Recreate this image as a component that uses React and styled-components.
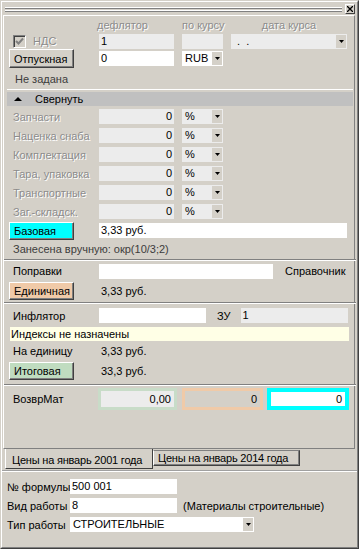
import React from "react";
import styled, { createGlobalStyle } from "styled-components";

const GlobalStyle = createGlobalStyle`
  html, body { margin: 0; padding: 0; background: #d4d0c8; }
  * { box-sizing: border-box; }
`;

const Window = styled.div`
  width: 359px;
  height: 549px;
  background: #d4d0c8;
  border: 1px solid;
  border-color: #d4d0c8 #404040 #404040 #d4d0c8;
  font-family: "Liberation Sans", Arial, sans-serif;
  font-size: 11px;
  color: #000;
  overflow: hidden;
`;

const Frame = styled.div`
  height: 100%;
  border: 1px solid;
  border-color: #fff #808080 #808080 #fff;
  display: flex;
  flex-direction: column;
`;

const TitleBar = styled.div`
  height: 13px;
  display: flex;
  align-items: center;
  padding: 0 1px 0 3px;
`;

const Grip = styled.div`
  flex: 1;
  display: flex;
  flex-direction: column;
  gap: 1px;
  margin: 2px 3px 0 0;
`;

const GripLine = styled.div`
  height: 2px;
  border-top: 1px solid #fff;
  border-bottom: 1px solid #808080;
`;

const CloseBtn = styled.div`
  width: 10px;
  height: 10px;
  margin-right: 1px;
  border: 1px solid;
  border-color: #fff #404040 #404040 #fff;
  display: flex;
  align-items: center;
  justify-content: center;
`;

const Panel = styled.div`
  flex: 1;
  margin: 0 2px 0 1px;
  padding: 0 1px 0 3px;
  border: 1px solid;
  border-color: #fff #808080 #808080 #fff;
  display: flex;
  flex-direction: column;
`;

const Row = styled.div`
  display: flex;
  align-items: center;
  height: ${(p) => p.$h}px;
  margin-top: ${(p) => p.$mt || 0}px;
  flex-shrink: 0;
`;

const Cell = styled.div`
  width: ${(p) => p.$w}px;
  padding-left: ${(p) => p.$pl || 0}px;
  display: flex;
  align-items: center;
  flex-shrink: 0;
  white-space: nowrap;
`;

const Label = styled.span`
  white-space: nowrap;
  color: ${(p) => (p.$disabled ? "#8c8c8c" : p.$dim ? "#3c3c3c" : "#000")};
  text-shadow: ${(p) => (p.$disabled ? "1px 1px 0 #fff" : "none")};
  margin-left: ${(p) => p.$ml || 0}px;
`;

const HeadLabel = styled.div`
  width: ${(p) => p.$w}px;
  text-align: ${(p) => p.$align || "left"};
  color: #8c8c8c;
  text-shadow: 1px 1px 0 #fff;
  flex-shrink: 0;
`;

const Field = styled.div`
  width: ${(p) => p.$w}px;
  height: 15px;
  margin-left: ${(p) => p.$ml || 0}px;
  background: ${(p) => p.$bg || "#fff"};
  text-align: ${(p) => p.$align || "left"};
  padding: 0 2px;
  line-height: 15px;
  flex-shrink: 0;
  white-space: nowrap;
  overflow: hidden;
`;

const Combo = styled.div`
  width: ${(p) => p.$w}px;
  height: 15px;
  margin-left: ${(p) => p.$ml || 0}px;
  background: ${(p) => p.$bg || "#fff"};
  display: flex;
  align-items: center;
  flex-shrink: 0;
`;

const ComboText = styled.div`
  flex: 1;
  padding-left: 3px;
  line-height: 15px;
  white-space: nowrap;
  overflow: hidden;
`;

const ArrowBtn = styled.div`
  width: 10px;
  height: 13px;
  margin: 1px;
  background: #d4d0c8;
  display: flex;
  align-items: center;
  justify-content: center;
`;

const Button = styled.div`
  width: 65px;
  height: ${(p) => p.$h || 18}px;
  margin-left: 2px;
  padding-left: 4px;
  background: ${(p) => p.$bg || "#d4d0c8"};
  border: 1px solid;
  border-color: #fff #404040 #404040 #fff;
  box-shadow: inset -1px -1px 0 #808080;
  display: flex;
  align-items: center;
  white-space: nowrap;
  flex-shrink: 0;
`;

const Value = styled.div`
  padding-left: 2px;
  white-space: nowrap;
`;

const Separator = styled.div`
  height: 2px;
  margin: ${(p) => p.$mt || 0}px -3px 0;
  border-top: 1px solid #808080;
  border-bottom: 1px solid #fff;
  flex-shrink: 0;
`;

const CollapseWrap = styled.div`
  border-top: 1px solid #fff;
  padding-top: 2px;
  flex-shrink: 0;
`;

const CollapseBar = styled.div`
  height: 14px;
  background: #c0c0c0;
  display: flex;
  align-items: center;
  padding-left: 7px;
`;

const InfoBar = styled.div`
  height: 14px;
  margin: 1px 4px 0 3px;
  padding-left: 1px;
  background: #ffffe6;
  line-height: 14px;
  flex-shrink: 0;
`;

const Framed = styled.div`
  width: ${(p) => p.$w}px;
  height: 22px;
  margin-left: ${(p) => p.$ml || 0}px;
  border: ${(p) => p.$bw}px solid ${(p) => p.$color};
  background: ${(p) => p.$bg};
  text-align: right;
  padding-right: 3px;
  line-height: ${(p) => 22 - p.$bw * 2}px;
  flex-shrink: 0;
`;

const CheckBox = styled.div`
  width: 13px;
  height: 13px;
  border: 1px solid;
  border-color: #808080 #fff #fff #808080;
  box-shadow: inset 1px 1px 0 #404040;
  background: #d4d0c8;
  display: flex;
  align-items: center;
  justify-content: center;
  flex-shrink: 0;
`;

const TabStrip = styled.div`
  height: 21px;
  display: flex;
  padding-left: 3px;
  flex-shrink: 0;
`;

const Tab = styled.div`
  width: ${(p) => p.$w}px;
  height: ${(p) => (p.$active ? 20 : 16)}px;
  margin-top: ${(p) => (p.$active ? 0 : 1)}px;
  padding: ${(p) => (p.$active ? "5px 0 0 6px" : "1px 0 0 4px")};
  border: 1px solid;
  border-color: ${(p) =>
    p.$active ? "transparent #404040 #404040 #fff" : "#808080 #404040 #404040 #fff"};
  border-top: ${(p) => (p.$active ? "none" : "1px solid #808080")};
  box-shadow: ${(p) => (p.$active ? "none" : "inset -1px -1px 0 #808080")};
  letter-spacing: -0.2px;
  white-space: nowrap;
`;

const TabLine = styled.div`
  height: 2px;
  border-top: 1px solid #a0a0a0;
  border-bottom: 1px solid #fff;
  flex-shrink: 0;
`;

const BottomForm = styled.div`
  height: 75px;
  padding-top: 5px;
  flex-shrink: 0;
`;

const Arrow = () => (
  <svg width="5" height="3" viewBox="0 0 5 3">
    <polygon points="0,0 5,0 2.5,3" fill="#000" />
  </svg>
);

const Select = ({ w, ml, bg, children }) => (
  <Combo $w={w} $ml={ml} $bg={bg}>
    <ComboText>{children}</ComboText>
    <ArrowBtn>
      <Arrow />
    </ArrowBtn>
  </Combo>
);

const params = [
  "Запчасти",
  "Наценка снаба",
  "Комплектация",
  "Тара, упаковка",
  "Транспортные",
  "Заг.-складск.",
];

export default function App() {
  return (
    <>
      <GlobalStyle />
      <Window>
        <Frame>
          <TitleBar>
            <Grip>
              <GripLine />
              <GripLine />
            </Grip>
            <CloseBtn>
              <svg width="6" height="6" viewBox="0 0 6 6">
                <path d="M0 0 L6 6 M6 0 L0 6" stroke="#000" strokeWidth="1.3" />
              </svg>
            </CloseBtn>
          </TitleBar>

          <Panel>
            <Row $h={16} $mt={1}>
              <Cell $w={90} />
              <HeadLabel $w={85}>дефлятор</HeadLabel>
              <HeadLabel $w={49}>по курсу</HeadLabel>
              <HeadLabel $w={116} $align="center">дата курса</HeadLabel>
            </Row>
            <Row $h={16}>
              <Cell $w={92} $pl={6}>
                <CheckBox>
                  <svg width="9" height="9" viewBox="0 0 9 9">
                    <polyline points="1,4 3.5,6.5 8,1.5" fill="none" stroke="#808080" strokeWidth="2" />
                  </svg>
                </CheckBox>
                <Label $disabled $ml={7}>НДС</Label>
              </Cell>
              <Field $w={75} $bg="#ececec">1</Field>
              <Field $w={41} $ml={8} $bg="#ececec" />
              <Select w={116} ml={8} bg="#ececec">&nbsp;.&nbsp;&nbsp;.</Select>
            </Row>
            <Row $h={19}>
              <Cell $w={92}>
                <Button $h={19}>Отпускная</Button>
              </Cell>
              <Field $w={75}>0</Field>
              <Select w={41} ml={8}>RUB</Select>
            </Row>
            <Row $h={21}>
              <Cell $w={92} $pl={8}>
                <Label $dim>Не задана</Label>
              </Cell>
            </Row>
            <CollapseWrap>
              <CollapseBar>
                <svg width="8" height="4" viewBox="0 0 8 4">
                  <polygon points="0,4 8,4 4,0" fill="#000" />
                </svg>
                <Label $ml={13}>Свернуть</Label>
              </CollapseBar>
            </CollapseWrap>

            {params.map((p, i) => (
              <Row key={p} $h={19} $mt={i === 0 ? 1 : 0}>
                <Cell $w={92} $pl={6}>
                  <Label $disabled>{p}</Label>
                </Cell>
                <Field $w={75} $bg="#ececec" $align="right">0</Field>
                <Select w={41} ml={8} bg="#ececec">%</Select>
              </Row>
            ))}

            <Row $h={19}>
              <Cell $w={92}>
                <Button $bg="#00ffff">Базовая</Button>
              </Cell>
              <Field $w={248}>3,33 руб.</Field>
            </Row>
            <Row $h={18}>
              <Cell $w={300} $pl={6}>
                <Label $dim>Занесена вручную: окр(10/3;2)</Label>
              </Cell>
            </Row>
            <Separator $mt={1} />

            <Row $h={20}>
              <Cell $w={92} $pl={6}>
                <Label>Поправки</Label>
              </Cell>
              <Field $w={174} />
              <Label $ml={12}>Справочник</Label>
            </Row>
            <Row $h={19}>
              <Cell $w={92}>
                <Button $bg="#f0caa8">Единичная</Button>
              </Cell>
              <Value>3,33 руб.</Value>
            </Row>
            <Separator $mt={2} />

            <Row $h={21} $mt={1}>
              <Cell $w={92} $pl={6}>
                <Label>Инфлятор</Label>
              </Cell>
              <Field $w={107} />
              <Label $ml={11}>ЗУ</Label>
              <Field $w={107} $ml={10} $bg="#ececec">1</Field>
            </Row>
            <InfoBar>Индексы не назначены</InfoBar>
            <Row $h={20}>
              <Cell $w={92} $pl={6}>
                <Label>На единицу</Label>
              </Cell>
              <Value>3,33 руб.</Value>
            </Row>
            <Row $h={19}>
              <Cell $w={92}>
                <Button $bg="#c0dcc0">Итоговая</Button>
              </Cell>
              <Value>33,3 руб.</Value>
            </Row>
            <Separator $mt={4} />

            <Row $h={22} $mt={2}>
              <Cell $w={91} $pl={6}>
                <Label>ВозврМат</Label>
              </Cell>
              <Framed $w={79} $bw={3} $color="#c8dcc8" $bg="#ececec">0,00</Framed>
              <Framed $w={81} $ml={5} $bw={3} $color="#f0caa8" $bg="#d4d0c8">0</Framed>
              <Framed $w={82} $ml={4} $bw={4} $color="#00ffff" $bg="#fff">0</Framed>
            </Row>
          </Panel>

          <TabStrip>
            <Tab $active $w={148}>Цены на январь 2001 года</Tab>
            <Tab $w={147}>Цены на январь 2014 года</Tab>
          </TabStrip>
          <TabLine />

          <BottomForm>
            <Row $h={19}>
              <Cell $w={68} $pl={5}>
                <Label>№ формулы</Label>
              </Cell>
              <Field $w={107}>500 001</Field>
            </Row>
            <Row $h={19}>
              <Cell $w={68} $pl={5}>
                <Label>Вид работы</Label>
              </Cell>
              <Field $w={107}>8</Field>
              <Label $ml={6}>(Материалы строительные)</Label>
            </Row>
            <Row $h={19}>
              <Cell $w={68} $pl={5}>
                <Label>Тип работы</Label>
              </Cell>
              <Select w={184}>СТРОИТЕЛЬНЫЕ</Select>
            </Row>
          </BottomForm>
        </Frame>
      </Window>
    </>
  );
}
